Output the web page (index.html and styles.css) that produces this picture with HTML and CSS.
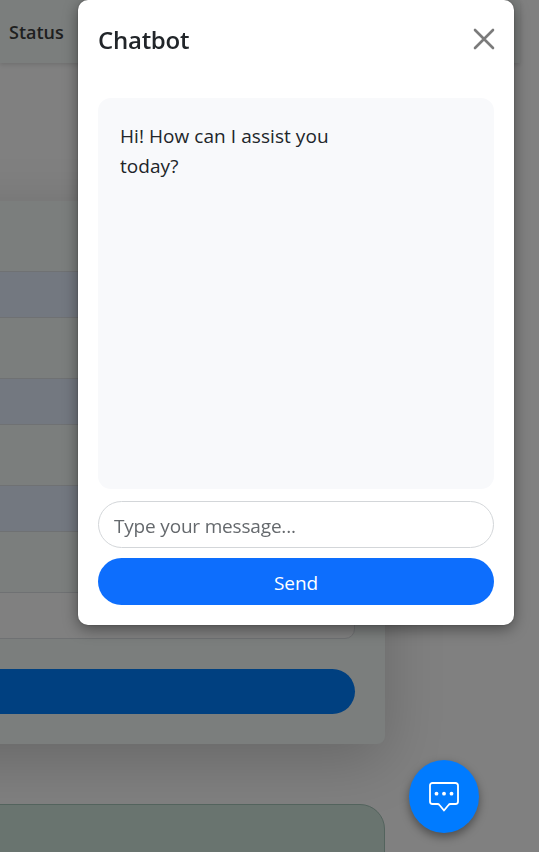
FILE: index.html
```html
<!DOCTYPE html>
<html lang="en">
<head>
<meta charset="utf-8">
<meta name="viewport" content="width=device-width, initial-scale=1">
<title>Chatbot</title>
<link rel="stylesheet" href="styles.css">
</head>
<body>
<div class="page">
  <nav class="navbar"><span class="nav-link">Status</span></nav>
  <section class="card">
    <div class="field"></div>
    <div class="field"></div>
    <div class="field"></div>
    <div class="field field-plain"></div>
    <div class="submit"></div>
  </section>
  <section class="result"></section>
</div>
<div class="modal">
  <header class="modal-header">
    <h5 class="title">Chatbot</h5>
    <button class="close" aria-label="Close">
      <svg viewBox="0 0 22 22" width="22" height="22"><path d="M2 2 20 20M20 2 2 20" fill="none" stroke="#7b7b7b" stroke-width="2.6" stroke-linecap="round"/></svg>
    </button>
  </header>
  <div class="messages"><p class="message">Hi! How can I assist you<br>today?</p></div>
  <input class="input" type="text" placeholder="Type your message...">
  <button class="send">Send</button>
</div>
<button class="fab" aria-label="Open chat">
  <svg viewBox="0 0 30 30" width="30" height="30"><path d="M3.500 1H26.500a2.500 2.500 0 0 1 2.500 2.500V19.500a2.500 2.500 0 0 1-2.500 2.500H21.500a2.500 2.500 0 0 0-2 1L15 28.500 10.500 23a2.500 2.500 0 0 0-2-1H3.500A2.500 2.500 0 0 1 1 19.500V3.500A2.500 2.500 0 0 1 3.500 1Z" fill="none" stroke="#fff" stroke-width="1.800" stroke-linejoin="round"/><g fill="#fff"><circle cx="7.500" cy="11.700" r="1.900"/><circle cx="15" cy="11.700" r="1.900"/><circle cx="22.500" cy="11.700" r="1.900"/></g></svg>
</button>
</body>
</html>
```
FILE: styles.css
```css
* { box-sizing: border-box; }
body {
  margin: 0;
  height: 852px;
  overflow: hidden;
  background: #808080;
  color: #212529;
  font-family: "Open Sans", "Noto Sans", sans-serif;
}
button { padding: 0; border: 0; font: inherit; }
svg { display: block; }
.page { height: 852px; overflow: hidden; }
.navbar {
  width: 520px;
  height: 63px;
  padding: 18px 0 0 9px;
  background: #7b7e7d;
  box-shadow: 0 2px 4px rgba(0, 0, 0, .12);
}
.nav-link {
  display: block;
  color: #1e2020;
  font-size: 18px;
  font-weight: 600;
  line-height: 28px;
}
.card {
  width: 485px;
  height: 543px;
  margin: 138px 0 0 -100px;
  padding: 70px 30px 30px 0;
  border-radius: 0 8px 8px 0;
  background: #7b7e7d;
  box-shadow: 0 16px 60px rgba(0, 0, 0, .2);
}
.field {
  height: 47px;
  margin-bottom: 60px;
  border: 1px solid #6f7173;
  border-radius: 10px;
  background: #737880;
}
.field-plain { margin-bottom: 30px; background: #808080; }
.submit { height: 45px; border-radius: 23px; background: #004080; }
.result {
  width: 485px;
  height: 100px;
  margin: 60px 0 0 -100px;
  border: 1px solid #53635d;
  border-radius: 25px;
  background: #69746f;
}
.modal {
  position: fixed;
  top: 0;
  left: 78px;
  width: 436px;
  height: 625px;
  padding: 0 20px 20px;
  display: flex;
  flex-direction: column;
  border-radius: 10px;
  background: #fff;
  box-shadow: 0 4px 15px rgba(0, 0, 0, .42), 0 0 2px rgba(0, 0, 0, .3);
}
.modal-header { height: 98px; display: flex; justify-content: space-between; }
.title {
  margin: 22px 0 0;
  font-size: 24px;
  font-weight: 600;
  line-height: 36px;
  letter-spacing: -.25px;
}
.close { width: 22px; height: 22px; margin: 28px -1px 0 0; background: none; }
.messages {
  height: 391px;
  padding: 23px 22px;
  border-radius: 13px;
  background: #f8f9fb;
}
.message { margin: 0; font-size: 19px; line-height: 30px; letter-spacing: .06px; white-space: nowrap; }
.input {
  width: 100%;
  height: 47px;
  margin: 12px 0 10px;
  padding: 2px 15px 0;
  border: 1px solid #d3d6d9;
  border-radius: 24px;
  outline: 0;
  background: #fff;
  font: 19px "Open Sans", "Noto Sans", sans-serif;
  letter-spacing: -.18px;
}
.input::placeholder { color: #65696d; opacity: 1; }
.send {
  height: 47px;
  padding-top: 2px;
  border-radius: 24px;
  background: #0d6efd;
  color: #fff;
  font-size: 19px;
  letter-spacing: -.1px;
}
.fab {
  position: fixed;
  top: 760px;
  left: 409px;
  width: 70px;
  height: 73px;
  display: grid;
  place-items: center;
  border-radius: 50%;
  background: #007bff;
  box-shadow: 0 4px 10px rgba(0, 0, 0, .4);
}
```
